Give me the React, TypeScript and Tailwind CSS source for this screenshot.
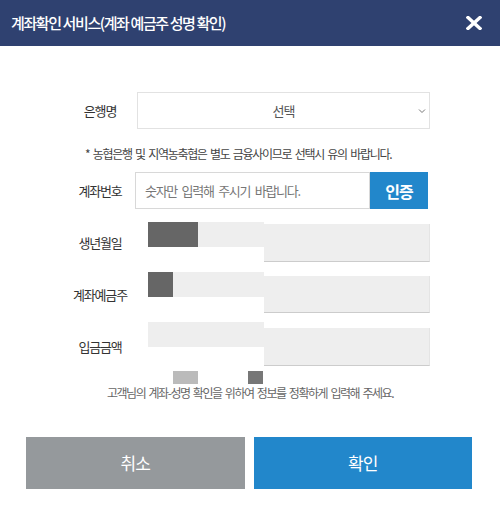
const font = "font-['Noto_Sans_CJK_KR','Liberation_Sans',sans-serif]";

function SkeletonRow({
  label,
  fill,
  offset,
  height,
}: {
  label: string;
  fill: number;
  offset: string;
  height: string;
}) {
  return (
    <div className="flex h-[50px] items-start">
      <div className={`flex w-[60px] items-center justify-center ${offset} ${height}`}>
        <span className="text-[13px] tracking-[-1.2px] text-[#333]">{label}</span>
      </div>
      {/* loading placeholder sitting over the field */}
      <div className="ml-[18px] flex h-[25px] w-[116px] bg-[#eeeeee]">
        <div className="h-full bg-[#666666]" style={{ width: fill }} />
      </div>
      <div
        className={`flex-1 border-r border-b border-r-[#e4e4e4] border-b-[#cccccc] bg-[#eeeeee] ${offset} ${height}`}
      />
    </div>
  );
}

export default function App() {
  return (
    <div className={`flex h-[520px] w-[500px] flex-col bg-white ${font}`}>
      <div className="flex h-[46px] shrink-0 items-center justify-between bg-[#2f4170] pl-[11px] pr-[18px]">
        <span className="text-[15px] font-medium tracking-[-1.4px] text-white">
          계좌확인 서비스(계좌 예금주 성명 확인)
        </span>
        <svg width="16" height="14" viewBox="0 0 16 14">
          <path d="M2 1.5 L14 12.5 M14 1.5 L2 12.5" stroke="white" strokeWidth="3.4" strokeLinecap="square" />
        </svg>
      </div>

      <div className="flex flex-col pl-[70px] pr-[70px]">
        <div className="mt-[46px] flex h-[37px] items-center">
          <div className="flex w-[60px] justify-center">
            <span className="text-[13px] tracking-[-1.2px] text-[#333]">은행명</span>
          </div>
          <div className="relative ml-[7px] flex h-full flex-1 items-center justify-center border border-[#e2e2e2] bg-white">
            <span className="text-[13px] tracking-[-1px] text-[#555]">선택</span>
            <svg className="absolute right-[3px] top-[15px]" width="8" height="6" viewBox="0 0 8 6">
              <path d="M1 1.5 L4 4.5 L7 1.5" stroke="#777" strokeWidth="1" fill="none" />
            </svg>
          </div>
        </div>

        <p className="mt-[17px] whitespace-nowrap pl-[15px] text-[12px] leading-[16px] tracking-[-1.3px] text-[#444] [word-spacing:2px]">
          * 농협은행 및 지역농축협은 별도 금융사이므로 선택시 유의 바랍니다.
        </p>

        <div className="mt-[10px] flex h-[37px] items-center">
          <div className="flex w-[60px] justify-center">
            <span className="text-[13px] tracking-[-1.2px] text-[#333]">계좌번호</span>
          </div>
          <div className="ml-[5px] flex h-full flex-1 items-center border border-[#d8d8d8] pl-[9px]">
            <span className="text-[13px] tracking-[-1.3px] text-[#777] [word-spacing:3px]">
              숫자만 입력해 주시기 바랍니다.
            </span>
          </div>
          <button className="mr-[2px] flex h-full w-[58px] items-center justify-center bg-[#2287cb] text-[16px] font-bold tracking-[-1px] text-white">
            인증
          </button>
        </div>

        <div className="mt-[13px] flex flex-col">
          <SkeletonRow label="생년월일" fill={50} offset="mt-[2px]" height="h-[38px]" />
          <SkeletonRow label="계좌예금주" fill={25} offset="mt-[4px]" height="h-[37px]" />
          <SkeletonRow label="입금금액" fill={0} offset="mt-[6px]" height="h-[38px]" />
        </div>
      </div>

      <div className="mt-[-1px] flex h-[13px] pl-[173px]">
        <div className="w-[25px] bg-[#bbbbbb]" />
        <div className="ml-[50px] w-[15px] bg-[#777777]" />
      </div>
      <p className="mt-[1px] whitespace-nowrap text-center text-[12px] leading-[16px] tracking-[-1.45px] text-[#666] [word-spacing:2px]">
        고객님의 계좌-성명 확인을 위하여 정보를 정확하게 입력해 주세요.
      </p>

      <div className="mt-[36px] flex gap-[9px] pl-[26px] pr-[28px]">
        <button className="flex h-[52px] flex-1 items-center justify-center bg-[#95999c] text-[17px] tracking-[-1px] text-white">
          취소
        </button>
        <button className="flex h-[52px] flex-1 items-center justify-center bg-[#2287cb] text-[17px] tracking-[-1px] text-white">
          확인
        </button>
      </div>
    </div>
  );
}
